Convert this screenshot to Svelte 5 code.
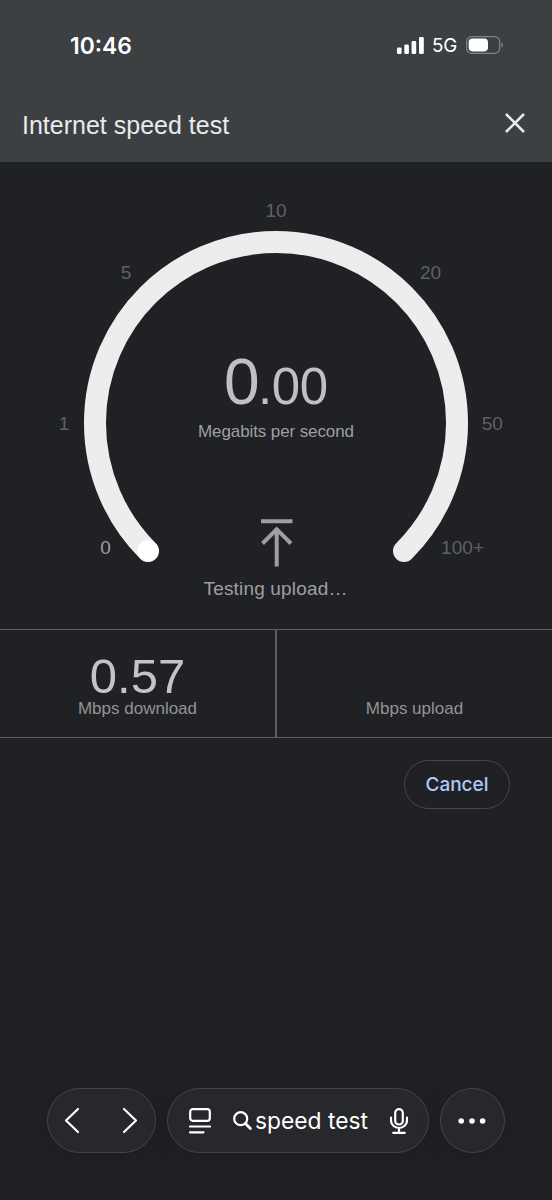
<script lang="ts">
  interface Tick {
    label: string;
    x: number;
    y: number;
    width: number;
    active?: boolean;
  }

  const ticks: Tick[] = [
    { label: '0', x: 105.5, y: 391.5, width: 11, active: true },
    { label: '1', x: 64, y: 268, width: 11 },
    { label: '5', x: 126, y: 117, width: 11 },
    { label: '10', x: 276, y: 55, width: 21.2 },
    { label: '20', x: 430.5, y: 117, width: 21.2 },
    { label: '50', x: 492.3, y: 268, width: 21.2 },
    { label: '100+', x: 462.5, y: 391.5, width: 43 }
  ];

  const whole = '0';
  const fraction = '.00';
  const download = '0.57';
  const upload = '';
</script>

<div class="screen">
  <header>
    <div class="status">
      <span class="clock">10:46</span>
      <div class="indicators">
        <svg class="signal" width="27" height="17" viewBox="0 0 27 17" fill="#fff">
          <rect x="0" y="10.5" width="4.6" height="6.5" rx="1.3" />
          <rect x="7.3" y="7.5" width="4.6" height="9.5" rx="1.3" />
          <rect x="14.6" y="4" width="4.6" height="13" rx="1.3" />
          <rect x="22" y="0" width="4.8" height="17" rx="1.3" />
        </svg>
        <span class="network">5G</span>
        <svg width="38" height="18" viewBox="0 0 38 18">
          <rect x="0.6" y="0.6" width="33" height="16.8" rx="5" fill="none" stroke="#818486" stroke-width="1.2" />
          <rect x="2.6" y="2.6" width="19.4" height="12.8" rx="3.8" fill="#fff" />
          <path d="M35.4 6.4c2 .8 2 4.4 0 5.2z" fill="#818486" />
        </svg>
      </div>
    </div>
    <div class="title-row">
      <h1>Internet speed test</h1>
      <button class="close" aria-label="Close">
        <svg width="20" height="20" viewBox="0 0 20 20">
          <path d="M1 1L19 19M19 1L1 19" stroke="#e8eaed" stroke-width="2.6" />
        </svg>
      </button>
    </div>
  </header>

  <svg class="gauge" width="552" height="467" viewBox="0 0 552 467">
    <path class="track" d="M148 389A181 181 0 1 1 404 389" />
    <!-- Needle position -->
    <circle cx="148" cy="389" r="10.7" fill="#fff" />

    {#each ticks as tick}
      <text class="tick" class:active={tick.active} x={tick.x} y={tick.y} textLength={tick.width}>{tick.label}</text>
    {/each}

    <text class="whole" x="224" y="242">{whole}</text>
    <text class="fraction" x="258" y="242" textLength="70">{fraction}</text>
    <text class="unit" x="276" y="274.5" textLength="156">Megabits per second</text>

    <path class="arrow" d="M261 359.3H292.5M276.7 404.5V366M262.5 381.5L276.7 367.3L291 381.5" />
    <text class="phase" x="275.5" y="432.5" textLength="144">Testing upload…</text>
  </svg>

  <section class="results">
    <div class="result">
      <span class="value">{download}</span>
      <span class="label">Mbps download</span>
    </div>
    <div class="result">
      <span class="value">{upload}</span>
      <span class="label">Mbps upload</span>
    </div>
  </section>

  <div class="actions">
    <button class="cancel">Cancel</button>
  </div>

  <nav>
    <div class="pill history">
      <svg width="16" height="27" viewBox="0 0 16 27">
        <path d="M14 2L2 13.5L14 25" />
      </svg>
      <svg width="16" height="27" viewBox="0 0 16 27">
        <path d="M2 2L14 13.5L2 25" />
      </svg>
    </div>
    <div class="pill address">
      <svg class="reader" width="22" height="26" viewBox="0 0 22 26">
        <rect x="1.2" y="1.2" width="19.6" height="11.6" rx="2.5" />
        <path d="M1 18.5H21M1 24.3H14.5" />
      </svg>
      <div class="query">
        <svg width="19" height="19" viewBox="0 0 19 19">
          <circle cx="7.7" cy="7.7" r="6.5" />
          <path d="M12.4 12.4L17.4 17.4" stroke-width="2.8" />
        </svg>
        <span>speed test</span>
      </div>
      <svg class="mic" width="18" height="26" viewBox="0 0 18 26">
        <rect x="5.2" y="1.1" width="7.6" height="15.4" rx="3.8" />
        <path d="M1 9.5V12.5A8 7.5 0 0 0 17 12.5V9.5M9 20V24.8M3.2 24.8H14.8" />
      </svg>
    </div>
    <div class="pill more">
      <svg width="28" height="6" viewBox="0 0 28 6">
        <circle cx="3.2" cy="3" r="2.8" />
        <circle cx="14" cy="3" r="2.8" />
        <circle cx="24.6" cy="3" r="2.8" />
      </svg>
    </div>
  </nav>
</div>

<style>
  :global(body) {
    margin: 0;
    background: #202124;
  }

  .screen {
    display: flex;
    flex-direction: column;
    width: 552px;
    height: 1200px;
    overflow: hidden;
    background: #202124;
    font-family: 'Liberation Sans', Arial, sans-serif;
  }

  button {
    padding: 0;
    border: 0;
    background: none;
    font: inherit;
  }

  svg {
    display: block;
    flex: none;
  }

  header {
    box-sizing: border-box;
    height: 162px;
    background: #3c4043;
  }

  .status {
    display: flex;
    align-items: center;
    justify-content: space-between;
    height: 90px;
    padding: 0 48px 0 70px;
    color: #fff;
    font-family: Inter, sans-serif;
  }

  .clock {
    font-size: 22.8px;
    font-weight: 600;
  }

  .indicators {
    display: flex;
    align-items: center;
  }

  .network {
    margin: 1px 9px 0 8px;
    font-size: 18.8px;
    letter-spacing: -0.2px;
  }

  .title-row {
    display: flex;
    align-items: center;
    justify-content: space-between;
    height: 66px;
    padding: 0 27px 0 22px;
  }

  h1 {
    margin: 4px 0 0;
    color: #e8eaed;
    font-size: 25px;
    font-weight: 400;
  }

  .gauge {
    font-family: 'Liberation Sans', Arial, sans-serif;
    text-anchor: middle;
  }

  .track {
    fill: none;
    stroke: #ededed;
    stroke-width: 22;
    stroke-linecap: round;
  }

  .tick {
    fill: #5f6063;
    font-size: 19px;
  }

  .tick.active {
    fill: #9c9da0;
  }

  .whole,
  .fraction {
    fill: #bfc0c1;
    font-size: 64px;
    text-anchor: start;
  }

  .fraction {
    font-size: 51px;
  }

  .unit {
    fill: #9e9fa1;
    font-size: 17px;
  }

  .arrow {
    fill: none;
    stroke: #9e9fa1;
    stroke-width: 4;
  }

  .phase {
    fill: #9e9fa1;
    font-size: 19px;
  }

  .results {
    display: flex;
    height: 107px;
    border-top: 1px solid #5c5e60;
    border-bottom: 1px solid #5c5e60;
  }

  .result {
    display: flex;
    flex: 1;
    flex-direction: column;
    align-items: center;
    padding-top: 19px;
  }

  .result + .result {
    border-left: 2px solid #5c5e60;
  }

  .value {
    height: 50px;
    color: #c3c4c6;
    font-size: 49px;
    line-height: 55px;
  }

  .label {
    color: #929395;
    font-size: 17px;
    line-height: 20px;
  }

  .actions {
    display: flex;
    justify-content: flex-end;
    padding: 22px 42px 0 0;
  }

  .cancel {
    box-sizing: border-box;
    width: 106px;
    height: 49px;
    padding-bottom: 1px;
    border: 1px solid #46484b;
    border-radius: 25px;
    color: #b0c8f8;
    font-family: Inter, sans-serif;
    font-size: 19px;
    font-weight: 500;
  }

  nav {
    display: flex;
    gap: 11px;
    margin-top: auto;
    padding: 0 47px 47px;
  }

  .pill {
    display: flex;
    align-items: center;
    box-sizing: border-box;
    height: 65px;
    border: 1px solid #434548;
    border-radius: 33px;
    background: #27282b;
    box-shadow: 0 4px 24px rgba(0, 0, 0, 0.12);
  }

  .pill svg {
    fill: none;
    stroke: #fff;
    stroke-width: 2.2;
    stroke-linecap: round;
    stroke-linejoin: round;
  }

  .history {
    justify-content: space-between;
    width: 109px;
    padding: 0 17px 0 16px;
  }

  .address {
    justify-content: space-between;
    width: 262px;
    padding: 0 20px 0 21px;
  }

  .query {
    display: flex;
    align-items: center;
    gap: 3px;
    color: #fff;
    font-family: Inter, sans-serif;
    font-size: 22.8px;
  }

  .more {
    justify-content: center;
    width: 65px;
    padding-right: 2px;
  }

  .pill.more svg {
    fill: #fff;
    stroke: none;
  }
</style>
